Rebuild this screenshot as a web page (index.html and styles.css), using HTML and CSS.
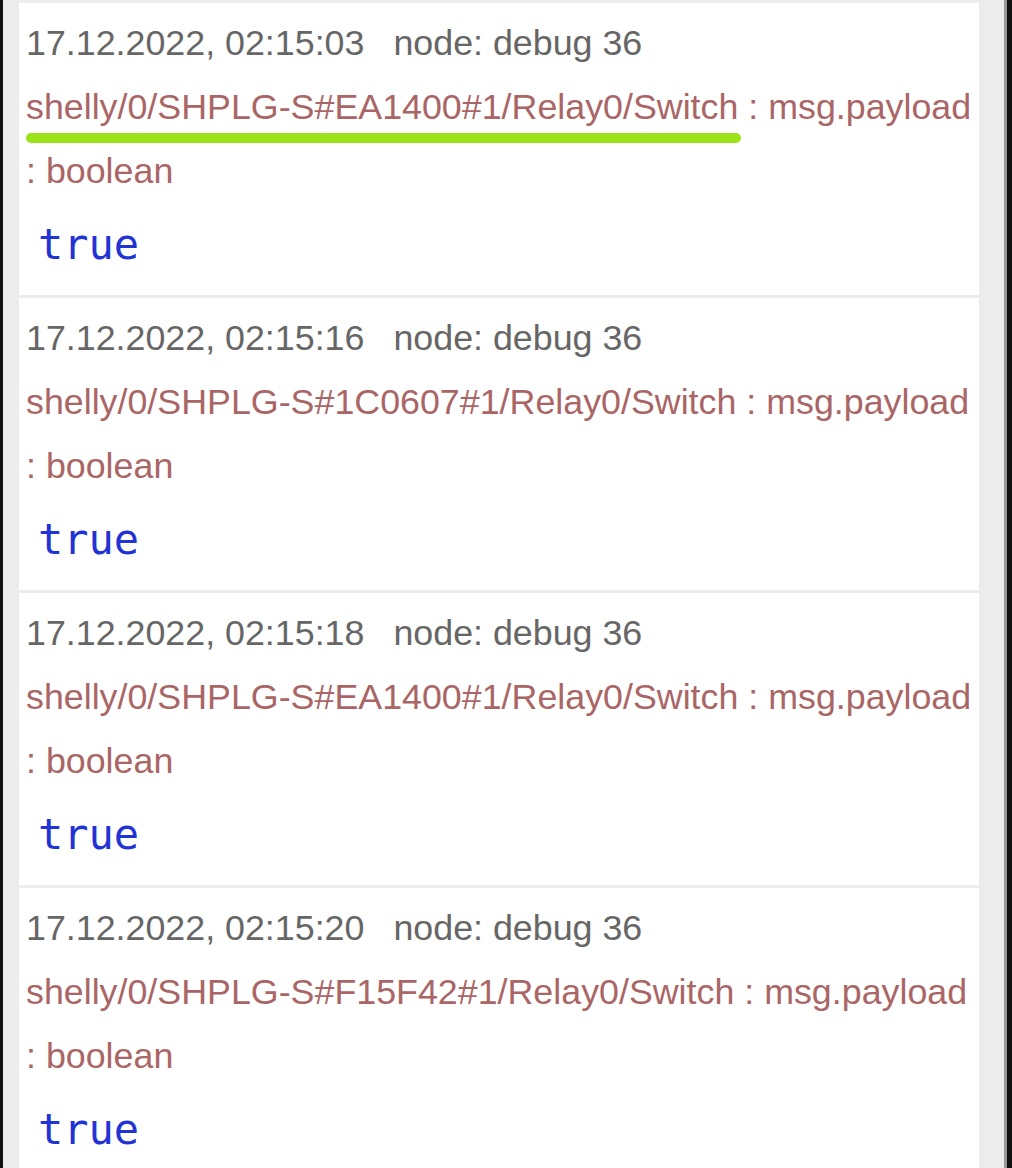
FILE: index.html
```html
<!DOCTYPE html>
<html lang="en">
<head>
    <meta charset="UTF-8">
    <title>Debug messages</title>
    <link rel="stylesheet" href="styles.css">
</head>
<body>
    <div class="panel">
        <div class="messages">
            <div class="msg">
                <div class="meta"><span class="date">17.12.2022, 02:15:03</span><span class="name">node: debug 36</span></div>
                <div class="topic"><span class="marked">shelly/0/SHPLG-S#EA1400#1/Relay0/Switch</span> : msg.payload : boolean</div>
                <div class="payload">true</div>
            </div>
            <div class="msg">
                <div class="meta"><span class="date">17.12.2022, 02:15:16</span><span class="name">node: debug 36</span></div>
                <div class="topic">shelly/0/SHPLG-S#1C0607#1/Relay0/Switch : msg.payload : boolean</div>
                <div class="payload">true</div>
            </div>
            <div class="msg">
                <div class="meta"><span class="date">17.12.2022, 02:15:18</span><span class="name">node: debug 36</span></div>
                <div class="topic">shelly/0/SHPLG-S#EA1400#1/Relay0/Switch : msg.payload : boolean</div>
                <div class="payload">true</div>
            </div>
            <div class="msg">
                <div class="meta"><span class="date">17.12.2022, 02:15:20</span><span class="name">node: debug 36</span></div>
                <div class="topic">shelly/0/SHPLG-S#F15F42#1/Relay0/Switch : msg.payload : boolean</div>
                <div class="payload">true</div>
            </div>
        </div>
    </div>
</body>
</html>
```

FILE: styles.css
```css
body {
    margin: 0;
    background-color: #111;
    font-family: "Liberation Sans", Arial, sans-serif;
}
.panel {
    height: 1168px;
    overflow: hidden;
    margin: 0 8px 0 3px;
    padding: 3px 25px 0 16px;
    background-color: #ececec;
    box-shadow: 3px 0 0 #999;
}
.messages {
    background-color: white;
}
.msg {
    padding: 8px 0 20px 7px;
    border-bottom: 3px solid #ececec;
}
.meta {
    color: #666;
    font-size: 35.8px;
    line-height: 64px;
}
.date {
    margin-right: 29px;
}
.topic {
    color: #a66;
    font-size: 35.8px;
    line-height: 64px;
}
.marked {
    position: relative;
}
.marked:after {
    content: "";
    position: absolute;
    left: 0;
    right: -3px;
    bottom: -16px;
    height: 10px;
    border-radius: 5px;
    background-color: #9de31a;
}
.payload {
    color: #2233d6;
    font-family: "DejaVu Sans Mono", monospace;
    font-size: 42px;
    line-height: 60px;
    padding: 12px 0 0 12px;
}
```
